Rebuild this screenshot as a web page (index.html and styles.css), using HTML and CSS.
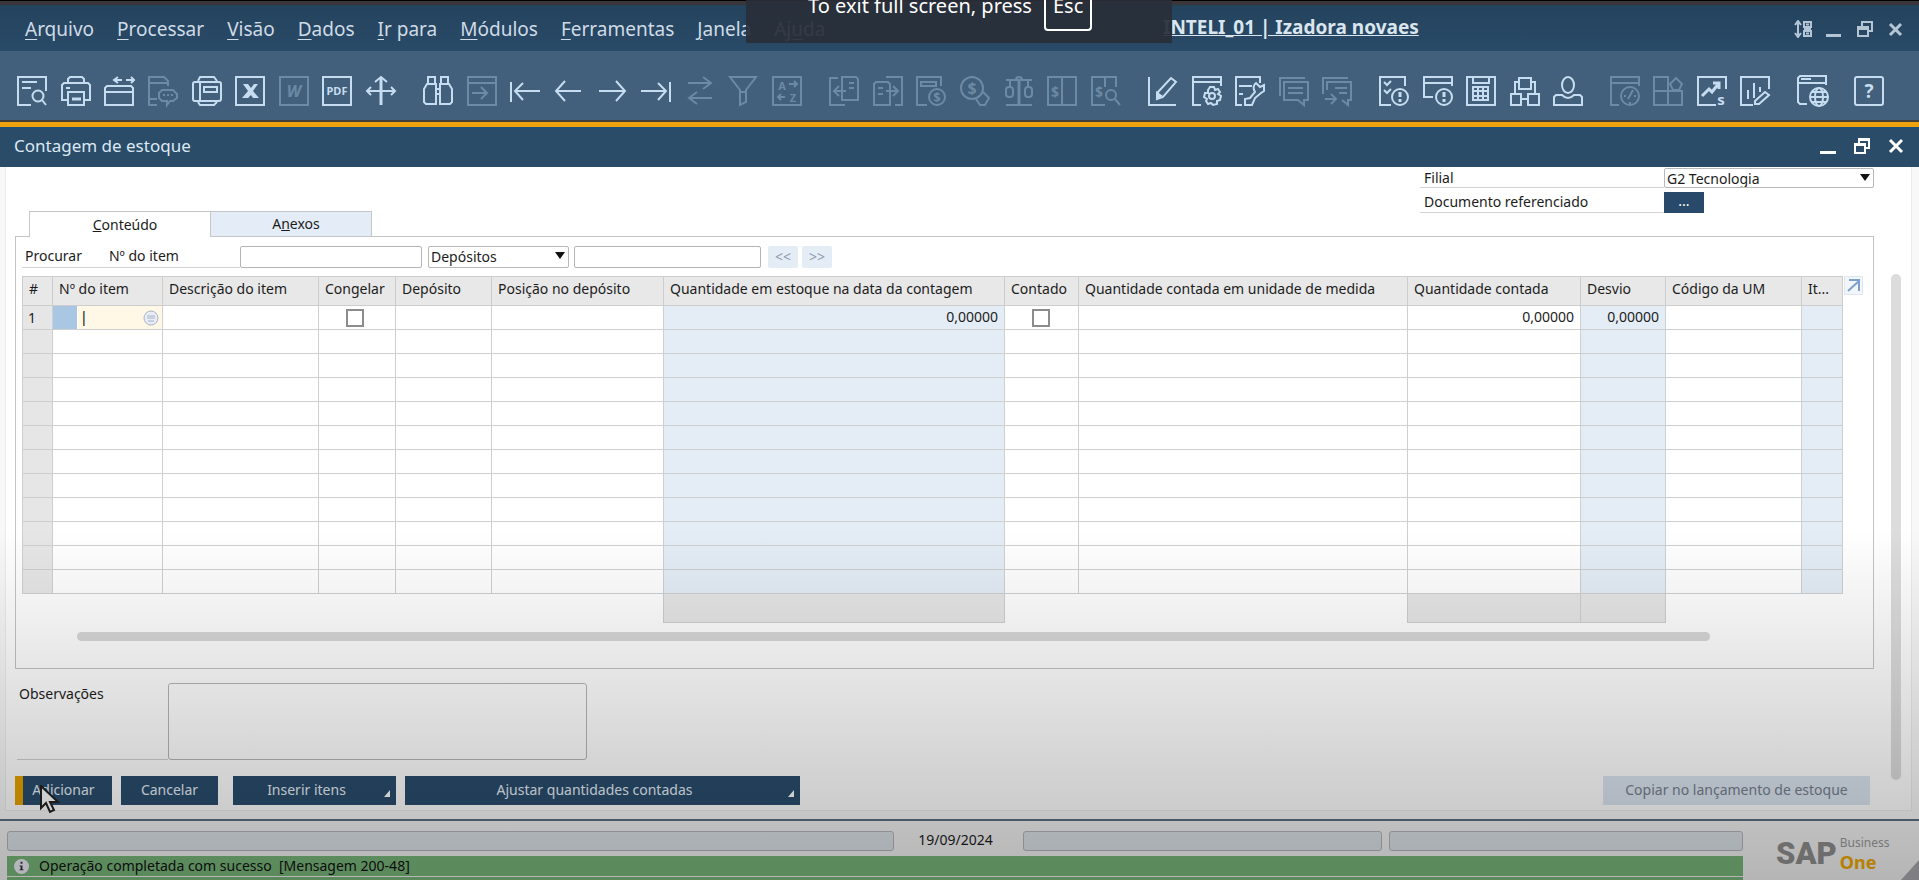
FILE: index.html
```html
<!DOCTYPE html>
<html lang="pt-BR">
<head>
<meta charset="utf-8">
<title>Contagem de estoque</title>
<link rel="stylesheet" href="styles.css">
</head>
<body>
<div class="edge"></div>
<header class="menubar">
  <nav class="menu">
    <a href="#"><u>A</u>rquivo</a><a href="#"><u>P</u>rocessar</a><a href="#"><u>V</u>isão</a><a href="#"><u>D</u>ados</a><a href="#"><u>I</u>r para</a><a href="#"><u>M</u>ódulos</a><a href="#"><u>F</u>erramentas</a><a href="#"><u>J</u>anela</a><a href="#">Aj<u>u</u>da</a>
  </nav>
  <a class="session" href="#">INTELI_01 | Izadora novaes</a>
  <div class="controls app-controls">
    <button aria-label="Alternar"><svg viewBox="0 0 18 18"><path d="M4 2v14M1 5l3-4 3 4M1 13l3 4 3-4"/><path d="M10 2h7v5h-7zM10 11h7v5h-7zM10 9h7M12 4.500h3M12 13.500h3"/></svg></button>
    <button aria-label="Minimizar"><svg viewBox="0 0 18 18"><path class="thick" d="M1 15.500h15"/></svg></button>
    <button aria-label="Restaurar"><svg viewBox="0 0 18 18"><path d="M2 7h10v9H2zM2 9h10M6 6V2h10v9h-3"/></svg></button>
    <button aria-label="Fechar"><svg viewBox="0 0 18 18"><path class="thick" d="M3 4l11 11M14 4L3 15"/></svg></button>
  </div>
</header>

<div class="toolbar">
  <div class="group g9">
    <button aria-label="Visualizar"><svg viewBox="0 0 30 30"><path d="M14 29H1V1h28v14M5 6h15M5 12h9"/><circle cx="21" cy="20" r="5.500"/><path d="M25 24l4 5"/></svg></button>
    <button aria-label="Imprimir"><svg viewBox="0 0 30 30"><path d="M7 7V3l2-2h12l2 2v4M7 24H1V9l2-2h24l2 2v15h-6M5 12h4M7 16h16v13H7z"/><path class="thick" d="M11 23h9"/></svg></button>
    <button aria-label="Exportar"><svg viewBox="0 0 30 30"><path d="M1 12l2-2h24l2 2v17H1zM1 16h28M11 4h7M22 4h8M14 1l-4 3 4 3M27 1l3 3-3 3"/></svg></button>
    <button aria-label="SMS" class="off" disabled><svg viewBox="0 0 30 30"><path d="M9 29H1V1h15l4 4v5M1 7h19M1 23h8M14 14h11l4 4v4l-4 3h-3l-3 4v-4h-5l-3-3v-5z"/><path d="M15 19h2M19 19h2M23 19h2"/></svg></button>
    <button aria-label="Fax"><svg viewBox="0 0 30 30"><path d="M6 5l2-4h14l3 4M6 26l2 3h14l3-3"/><rect x="1" y="6" width="28" height="19" rx="2"/><path d="M8 6v19M12 11h13v5H12z"/></svg></button>
    <button aria-label="Excel"><svg viewBox="0 0 30 30"><rect x="1" y="1" width="28" height="28"/><path class="fill" d="M8 8h5l3 4 3-4h4l-5 7 6 7h-6l-2-3-3 3H7l6-7z"/></svg></button>
    <button aria-label="Word" class="off" disabled><svg viewBox="0 0 30 30"><rect x="1" y="1" width="28" height="28"/><text x="15" y="21" font-size="16" font-style="italic">W</text></svg></button>
    <button aria-label="PDF"><svg viewBox="0 0 30 30"><rect x="1" y="1" width="28" height="28"/><text x="15" y="19" font-size="11">PDF</text></svg></button>
    <button aria-label="Mover"><svg viewBox="0 0 30 30"><path class="thick" d="M15 1v28"/><path d="M1 15h28M9 6l6-5 6 5M5 11l-4 4 4 4M25 11l4 4-4 4"/></svg></button>
  </div>
  <div class="group g9">
    <button aria-label="Localizar"><svg viewBox="0 0 30 30"><path d="M5 8V1h7v7M18 8V1h7v7M4 8h9v20H3l-2-2V13zM26 8h-9v20h10l2-2V13zM13 13h4M13 18h4"/></svg></button>
    <button aria-label="Adicionar registro" class="off" disabled><svg viewBox="0 0 30 30"><path d="M1 1h28v28H1zM1 7h28M5 17h14M14 11l6 6-6 6"/></svg></button>
    <button aria-label="Primeiro"><svg viewBox="0 0 30 30"><path d="M1 6v20M5 15h25M13 7l-8 8 8 9"/></svg></button>
    <button aria-label="Anterior"><svg viewBox="0 0 30 30"><path d="M2 15h25M11 5L2 15l9 10"/></svg></button>
    <button aria-label="Próximo"><svg viewBox="0 0 30 30"><path d="M1 15h26M18 5l9 10-9 10"/></svg></button>
    <button aria-label="Último"><svg viewBox="0 0 30 30"><path d="M29 6v20M0 15h25M17 7l8 8-8 9"/></svg></button>
    <button aria-label="Atualizar" class="off" disabled><svg viewBox="0 0 30 30"><path d="M3 7h22M18 1l8 6-8 6M27 22H5M12 16l-8 6 8 6"/></svg></button>
    <button aria-label="Filtrar" class="off" disabled><svg viewBox="0 0 30 30"><path d="M2 1h26L18 14v12l-6 3V14zM12 16h6"/></svg></button>
    <button aria-label="Classificar" class="off" disabled><svg viewBox="0 0 30 30"><rect x="1" y="1" width="28" height="28"/><text x="10" y="14" font-size="11">A</text><text x="21" y="26" font-size="11">Z</text><path d="M17 8h7M22 5l3 3-3 3M13 21H6M9 18l-3 3 3 3"/></svg></button>
  </div>
  <div class="group g7">
    <button aria-label="Documento base" class="off" disabled><svg viewBox="0 0 30 30"><path d="M9 2H1v27h15M13 1h14l2 2v21H13zM5 15h12M10 10l-5 5 5 5M20 7h5M20 12h5"/></svg></button>
    <button aria-label="Documento de destino" class="off" disabled><svg viewBox="0 0 30 30"><path d="M13 1h16v28h-7M3 6h12l2 2v21H1V8zM5 12h5M5 18h5M13 15h12M20 10l5 5-5 5"/></svg></button>
    <button aria-label="Lucro bruto" class="off" disabled><svg viewBox="0 0 30 30"><path d="M11 29H1V1h24v9M5 6h15v4H5z"/><circle cx="21" cy="21" r="8"/><text x="21" y="26" font-size="13">$</text></svg></button>
    <button aria-label="Meios de pagamento" class="off" disabled><svg viewBox="0 0 30 30"><circle cx="12" cy="12" r="11"/><text x="12" y="18" font-size="16">$</text><path d="M23 16l6 6-4 7h-5l-4-6"/></svg></button>
    <button aria-label="Balança" class="off" disabled><svg viewBox="0 0 30 30"><path class="thick" d="M15 3v26"/><path d="M2 29h26M2 4h26M12 4a3 3 0 0 1 6 0M6 4v7M24 4v7"/><rect x="2" y="11" width="7" height="10" rx="3"/><rect x="21" y="11" width="7" height="10" rx="3"/></svg></button>
    <button aria-label="Diário" class="off" disabled><svg viewBox="0 0 30 30"><path d="M1 1h28v28H1zM15 1v28"/><text x="8" y="21" font-size="14">$</text></svg></button>
    <button aria-label="Consultar diário" class="off" disabled><svg viewBox="0 0 30 30"><path d="M14 29H1V1h24v10M14 1v10"/><text x="8" y="21" font-size="14">$</text><circle cx="20" cy="19" r="5"/><path d="M24 23l5 6"/></svg></button>
  </div>
  <div class="group g5">
    <button aria-label="Editar"><svg viewBox="0 0 30 30"><path d="M1 1v28h27M10 16L23 2l5 4-13 15-6 2z"/><path class="fill" d="M8 15l7 5-5 3H8z"/></svg></button>
    <button aria-label="Configurações"><svg viewBox="0 0 30 30"><path d="M9 29H1V1h28v9M1 6h28"/><circle cx="20" cy="20" r="3"/><path d="M18 11h4l1 3 3-1 2 3-2 2 3 2-1 4-3 1v3l-4 1-2-2-3 1-2-3 1-2-3-2 1-4 3 0 0-3z"/></svg></button>
    <button aria-label="Ferramentas"><svg viewBox="0 0 30 30"><path d="M7 29H1V1h24v6M4 10h13M4 18h4M21 7c-3 2-3 6-1 9l-5 6-5 1v6h7l3-7 6-5 3-2V9l-4 2-2-2z"/></svg></button>
    <button aria-label="Mensagens" class="off" disabled><svg viewBox="0 0 30 30"><path d="M1 20V2h25M5 6h24v18h-4v5l-6-5H5zM9 12h15M9 17h15"/></svg></button>
    <button aria-label="Encaminhar" class="off" disabled><svg viewBox="0 0 30 30"><path d="M1 18V2h25M5 14V6h24v18h-3v5l-6-5M13 12h12M17 17h8M3 23h11M9 18l5 5-5 5"/></svg></button>
  </div>
  <div class="group g5">
    <button aria-label="Atividades"><svg viewBox="0 0 30 30"><path d="M12 29H1V1h25v9M5 6l3 3 4-4M5 14l3 3 4-4"/><circle cx="21" cy="21" r="8"/><path class="thick" d="M21 16v5M21 23v3"/></svg></button>
    <button aria-label="Alertas"><svg viewBox="0 0 30 30"><path d="M10 21H1V1h28v9M1 7h28"/><circle cx="21" cy="21" r="8"/><path class="thick" d="M21 16v5M21 23v3"/></svg></button>
    <button aria-label="Calendário"><svg viewBox="0 0 30 30"><path d="M1 1h28v28H1zM7 1v6h16V1M7 11h15v13H7zM7 15h15M7 20h15M12 11v13M17 11v13"/></svg></button>
    <button aria-label="Relações"><svg viewBox="0 0 30 30"><path d="M9 2h12v11H9zM1 18h10v11H1zM18 18h11v11H18zM9 6H5v12M21 6h4v12M11 23h7"/></svg></button>
    <button aria-label="Usuário"><svg viewBox="0 0 30 30"><ellipse cx="15" cy="9" rx="6" ry="8"/><path d="M9 19H3l-2 2v8h28v-8l-2-2h-6c-4 4-8 4-12 0z"/></svg></button>
  </div>
  <div class="group g4">
    <button aria-label="Histórico" class="off" disabled><svg viewBox="0 0 30 30"><path d="M9 29H1V1h28v9M1 7h28"/><circle cx="20" cy="20" r="9"/><path d="M23 14l-5 9M14 20h2M24 20h2M20 26v2"/></svg></button>
    <button aria-label="Painel" class="off" disabled><svg viewBox="0 0 30 30"><path d="M1 1h14v28H1zM1 15h28v14H15M23 2l6 6-3 6h-6l-3-6z"/></svg></button>
    <button aria-label="Indicadores"><svg viewBox="0 0 30 30"><path d="M19 29H1V1h28v12"/><path class="thick" d="M5 20l7-7 3 3 7-9M16 7h6v6"/><text x="24" y="29" font-size="15">s</text></svg></button>
    <button aria-label="Relatórios"><svg viewBox="0 0 30 30"><path d="M13 29H1V1h28v12M8 14v9M14 7v15M20 11v5M15 25l10-9 4 3-10 9h-4z"/></svg></button>
  </div>
  <button aria-label="Navegador"><svg viewBox="0 0 30 30"><path d="M10 28H3l-2-2V2l2-2h26v9M1 7h28M4 3h10"/><circle cx="22" cy="21" r="9"/><ellipse cx="22" cy="21" rx="4" ry="9"/><path d="M13 21h18M15 16h15M15 26h14"/></svg></button>
  <button aria-label="Ajuda"><svg viewBox="0 0 30 30"><rect x="1" y="1" width="28" height="28" rx="2"/><text x="15" y="22" font-size="19">?</text></svg></button>
</div>

<section class="window">
  <div class="titlebar">
    <h1>Contagem de estoque</h1>
    <div class="controls">
      <button aria-label="Minimizar janela"><svg viewBox="0 0 18 18"><path class="thick" d="M1 15.500h16"/></svg></button>
      <button aria-label="Restaurar janela"><svg viewBox="0 0 18 18"><path d="M2 7h10v9H2zM2 8h10M6 6V2h10v9h-3M6 3h10"/></svg></button>
      <button aria-label="Fechar janela"><svg viewBox="0 0 18 18"><path class="thick" d="M3 3l12 12M15 3L3 15"/></svg></button>
    </div>
  </div>
  <div class="content">
    <main class="form">
      <div class="top">
        <div class="tabs" role="tablist">
          <button role="tab" aria-selected="true" class="tab active"><u>C</u>onteúdo</button><button role="tab" aria-selected="false" class="tab">A<u>n</u>exos</button>
        </div>
        <div class="fields">
          <label for="filial">Filial</label>
          <span class="pick"><select id="filial"><option>G2 Tecnologia</option></select></span>
          <label for="docref">Documento referenciado</label>
          <button id="docref" class="more">...</button>
        </div>
      </div>
      <div class="panel">
        <div class="search">
          <label class="line" for="procurar"><span>Procurar</span><span>Nº do item</span></label>
          <input id="procurar" class="box first" type="text">
          <span class="pick dep"><select aria-label="Campo"><option>Depósitos</option></select></span>
          <input class="box second" type="text" aria-label="Depósito">
          <button class="step" disabled>&lt;&lt;</button>
          <button class="step" disabled>&gt;&gt;</button>
        </div>
        <div class="gridwrap">
          <table class="grid">
            <colgroup><col class="c30"><col class="c110"><col class="c156"><col class="c77"><col class="c96"><col class="c172"><col class="c341"><col class="c74"><col class="c329"><col class="c173"><col class="c85"><col class="c136"><col class="c41"></colgroup>
            <thead><tr><th class="num">#</th><th>Nº do item</th><th>Descrição do item</th><th>Congelar</th><th>Depósito</th><th>Posição no depósito</th><th>Quantidade em estoque na data da contagem</th><th>Contado</th><th>Quantidade contada em unidade de medida</th><th>Quantidade contada</th><th>Desvio</th><th>Código da UM</th><th>It...</th></tr></thead>
            <tbody>
              <tr><td class="no">1</td><td class="edit"><div class="editor"><span class="mark"></span><input type="text" value="|" aria-label="Nº do item"><svg class="pickicon" viewBox="0 0 16 16"><circle cx="8" cy="8" r="7"/><path d="M4 6h8M4 8h8M5 11h6"/></svg></div></td><td></td><td class="mid"><input type="checkbox" aria-label="Congelar"></td><td></td><td></td><td class="ro val">0,00000</td><td class="mid"><input type="checkbox" aria-label="Contado"></td><td></td><td class="val">0,00000</td><td class="ro val">0,00000</td><td></td><td class="ro"></td></tr>
              <tr><td class="no"></td><td></td><td></td><td></td><td></td><td></td><td class="ro"></td><td></td><td></td><td></td><td class="ro"></td><td></td><td class="ro"></td></tr>
              <tr><td class="no"></td><td></td><td></td><td></td><td></td><td></td><td class="ro"></td><td></td><td></td><td></td><td class="ro"></td><td></td><td class="ro"></td></tr>
              <tr><td class="no"></td><td></td><td></td><td></td><td></td><td></td><td class="ro"></td><td></td><td></td><td></td><td class="ro"></td><td></td><td class="ro"></td></tr>
              <tr><td class="no"></td><td></td><td></td><td></td><td></td><td></td><td class="ro"></td><td></td><td></td><td></td><td class="ro"></td><td></td><td class="ro"></td></tr>
              <tr><td class="no"></td><td></td><td></td><td></td><td></td><td></td><td class="ro"></td><td></td><td></td><td></td><td class="ro"></td><td></td><td class="ro"></td></tr>
              <tr><td class="no"></td><td></td><td></td><td></td><td></td><td></td><td class="ro"></td><td></td><td></td><td></td><td class="ro"></td><td></td><td class="ro"></td></tr>
              <tr><td class="no"></td><td></td><td></td><td></td><td></td><td></td><td class="ro"></td><td></td><td></td><td></td><td class="ro"></td><td></td><td class="ro"></td></tr>
              <tr><td class="no"></td><td></td><td></td><td></td><td></td><td></td><td class="ro"></td><td></td><td></td><td></td><td class="ro"></td><td></td><td class="ro"></td></tr>
              <tr><td class="no"></td><td></td><td></td><td></td><td></td><td></td><td class="ro"></td><td></td><td></td><td></td><td class="ro"></td><td></td><td class="ro"></td></tr>
              <tr><td class="no"></td><td></td><td></td><td></td><td></td><td></td><td class="ro"></td><td></td><td></td><td></td><td class="ro"></td><td></td><td class="ro"></td></tr>
              <tr><td class="no"></td><td></td><td></td><td></td><td></td><td></td><td class="ro"></td><td></td><td></td><td></td><td class="ro"></td><td></td><td class="ro"></td></tr>
            </tbody>
            <tfoot><tr><td colspan="6" class="none"></td><td class="sum"></td><td colspan="2" class="none"></td><td class="sum"></td><td class="sum"></td><td colspan="2" class="none"></td></tr></tfoot>
          </table>
          <button class="expand" aria-label="Expandir"><svg viewBox="0 0 17 17"><path d="M3 14L14 4M4 3h10v11"/></svg></button>
        </div>
        <div class="hscroll"></div>
      </div>
      <div class="notes">
        <label for="obs">Observações</label>
        <textarea id="obs"></textarea>
      </div>
      <div class="actions">
        <button class="act primary">Adicionar</button>
        <button class="act cancel">Cancelar</button>
        <button class="act insert drop">Inserir itens</button>
        <button class="act adjust drop">Ajustar quantidades contadas</button>
        <button class="act copy" disabled>Copiar no lançamento de estoque</button>
        <svg class="cursor" viewBox="0 0 20 30"><path d="M1 1v22l5-5 4 9 4-2-4-8h8z"/></svg>
      </div>
    </main>
    <div class="vscroll"></div>
  </div>
</section>

<footer class="status">
  <div class="lines">
    <div class="slots"><span class="slot s1"></span><time datetime="2024-09-19">19/09/2024</time><span class="slot s2"></span><span class="slot s3"></span></div>
    <div class="message"><svg viewBox="0 0 16 16"><circle cx="8" cy="8" r="8"/><path d="M7 3h2v2H7zM6 7h3v4h1v1H6v-1h1V8H6z"/></svg><span>Operação completada com sucesso&nbsp; [Mensagem 200-48]</span></div>
    <div class="next"></div>
  </div>
  <div class="brand"><b>SAP</b><div class="product"><span>Business</span><strong>One</strong></div></div>
  <svg class="grip" viewBox="0 0 18 20"><path d="M18 0v20H0z"/></svg>
</footer>
<div class="shade"></div>
<div class="toast"><svg class="nub" viewBox="0 0 60 26"><path class="tab-shape" d="M0 0h60l-3 22-5 4H8l-5-4z"/><path d="M22 12l8 7 8-7"/></svg><span>To exit full screen, press</span><kbd>Esc</kbd></div>
</body>
</html>
```
FILE: styles.css
```css
* { box-sizing: border-box; }
body {
  margin: 0;
  height: 100vh;
  display: flex;
  flex-direction: column;
  position: relative;
  overflow: hidden;
  background: #fff;
  color: #1c1c1c;
  font: 14px/20px "Noto Sans", "Open Sans", sans-serif;
}
button, input, select, textarea { font: inherit; color: inherit; margin: 0; }
button { padding: 0; border: 0; background: none; }
svg { display: block; fill: none; stroke: currentColor; stroke-width: 2; }
.thick { stroke-width: 3; }
.edge { height: 5px; background: #3a3639; border-top: 1px solid #000; flex: none; }

.menubar {
  display: flex;
  align-items: center;
  position: relative;
  height: 46px;
  flex: none;
  padding: 2px 14px 0 25px;
  background: linear-gradient(#24435d, #294a68);
}
.menu { display: flex; gap: 23px; font-size: 19px; line-height: 26px; }
.menu a { color: #cfdbe6; text-decoration: none; }
.menu u { text-underline-offset: 3px; }
.session {
  position: absolute;
  left: 1163px;
  top: 9px;
  color: #dbe5ee;
  font: bold 19px/26px "Noto Sans", sans-serif;
}
.controls { display: flex; gap: 16px; margin-left: auto; color: #fff; }
.controls svg { width: 18px; height: 18px; }
.app-controls { color: #b4c6d6; gap: 13px; }

.toolbar {
  display: flex;
  align-items: center;
  gap: 27px;
  height: 71px;
  flex: none;
  padding: 10px 17px 0;
  border-bottom: 2px solid #42403c;
  background: #425f7b;
  color: #c6dcf0;
}
.group { display: flex; justify-content: space-between; flex: none; }
.g9 { width: 379px; }
.g7 { width: 292px; }
.g5 { width: 204px; }
.g4 { width: 160px; }
.toolbar svg { width: 30px; height: 30px; overflow: visible; }
.toolbar .off { color: #6b8aa4; }
.toolbar text { fill: currentColor; stroke: none; text-anchor: middle; font-family: "Noto Sans", sans-serif; font-weight: bold; }
.toolbar .fill { fill: currentColor; stroke: none; }

.window { flex: 1; display: flex; flex-direction: column; border-bottom: 2px solid #5a6f84; }
.titlebar {
  display: flex;
  align-items: center;
  height: 45px;
  padding: 0 14px 2px;
  border-top: 5px solid #eda20e;
  box-shadow: inset 0 2px #1e5079;
  background: #2a4c69;
}
.titlebar h1 { margin: 0; color: #dce8f3; font-size: 17px; line-height: 22px; font-weight: 400; }

.content {
  flex: 1;
  display: flex;
  margin: 0 7px 8px 5px;
  border: 1px solid #ececec;
  border-top: 0;
  box-shadow: 0 0 0 8px #f8f8f8;
  clip-path: inset(0 -8px -8px -8px);
}
.form { flex: 1; display: flex; flex-direction: column; padding: 1px 0 0 9px; }
.top { display: flex; justify-content: space-between; height: 68px; }
.tabs { display: flex; align-self: flex-end; padding-left: 14px; position: relative; }
.tab { width: 162px; height: 26px; border: 1px solid #c4c6c8; background: #e4edf7; padding-left: 10px; margin-bottom: -1px; }
.tab.active { width: 181px; border-right: 0; border-bottom: 0; background: #fff; z-index: 1; }
.fields {
  display: grid;
  grid-template-columns: 244px 210px;
  grid-template-rows: 20px 21px;
  row-gap: 4px;
  align-content: start;
}
.fields label { border-bottom: 1px solid #d4d4d4; padding-left: 4px; }
.more { width: 40px; height: 21px; background: #29496a; color: #fff; line-height: 16px; padding-bottom: 4px; }
.pick { position: relative; display: block; }
.pick::after {
  content: "";
  position: absolute;
  right: 4px;
  top: 6px;
  border: 5px solid transparent;
  border-top: 7px solid #111;
  border-bottom: 0;
}
select {
  appearance: none;
  display: block;
  width: 100%;
  height: 100%;
  padding: 0 2px;
  border: 1px solid #b8b8b8;
  border-radius: 2px;
  background: transparent;
}

.panel { border: 1px solid #c2c4c6; padding: 9px 10px 27px 6px; }
.search { display: flex; height: 22px; }
.line { display: flex; width: 218px; padding-left: 3px; border-bottom: 1px solid #d4d4d4; gap: 27px; }
.box { height: 22px; border: 1px solid #b4b4b4; border-radius: 2px; background: transparent; }
.first { width: 182px; }
.dep { width: 141px; margin: 0 5px 0 6px; }
.second { width: 187px; margin-right: 7px; }
.step { width: 30px; margin-right: 4px; border-radius: 2px; background: #e4ecf6; color: #8c9cb0; }
.gridwrap { display: flex; align-items: flex-start; gap: 1px; margin-top: 8px; }
.grid { flex: 1; width: 100%; table-layout: fixed; border-collapse: collapse; }
.c30 { width: 30px; } .c110 { width: 110px; } .c156 { width: 156px; } .c77 { width: 77px; }
.c96 { width: 96px; } .c172 { width: 172px; } .c341 { width: 341px; } .c74 { width: 74px; }
.c329 { width: 329px; } .c173 { width: 173px; } .c85 { width: 85px; } .c136 { width: 136px; }
.c41 { width: 41px; }
.grid th { height: 29px; padding: 0 0 4px 6px; background: #e8e8e8; border: 1px solid #cdcdcd; text-align: left; font-weight: 400; white-space: nowrap; }
.grid td { height: 24px; padding: 0; border: 1px solid #cdcfd1; line-height: 22px; }
.grid .no { background: #e6e6e6; padding-left: 5px; }
.grid .ro { background: #e4edf6; }
.grid .val { text-align: right; padding-right: 6px; padding-bottom: 1px; }
.grid .mid { padding-left: 27px; }
.grid .none { border: 0; }
.grid .sum { height: 29px; background: #e6e6e6; }
.mid input {
  appearance: none;
  display: block;
  width: 18px;
  height: 18px;
  border: 2px solid #8a8c8e;
  background: #fff;
}
.editor { display: flex; height: 23px; align-items: center; background: #fff8e6; }
.mark { align-self: stretch; width: 25px; background: #a9c6e2; border-right: 1px solid #fff; flex: none; }
.editor input { flex: 1; min-width: 0; width: 10px; height: 23px; padding: 0 0 3px 2px; border: 0; background: transparent; color: #000; }
.pickicon { width: 16px; height: 16px; margin-right: 3px; color: #a8b4c8; stroke-width: 1; fill: #e8ecf4; }
.expand { border: 1px solid #dde6f2; background: #f2f6fb; color: #7fa0cb; }
.expand svg { width: 17px; height: 17px; }
.hscroll { height: 9px; margin: 9px 153px 0 55px; border-radius: 5px; background: #d8d8d8; }
.vscroll { flex: none; width: 10px; margin: 107px 10px 30px 17px; border-radius: 5px; background: #dcdcdc; }

.notes { display: flex; margin: 14px 0 0 2px; }
.notes label { width: 151px; padding: 1px 0 0 2px; border-bottom: 1px solid #d0d0d0; }
.notes textarea { width: 419px; height: 77px; border: 1px solid #b6b6b6; border-radius: 3px; background: transparent; resize: none; }
.actions { display: flex; position: relative; margin-top: 16px; }
.act { height: 29px; padding-bottom: 2px; background: #294c6c; color: #e6eef6; position: relative; }
.primary { width: 97px; border-left: 8px solid #e8a200; margin-right: 9px; padding-right: 8px; }
.cancel { width: 97px; margin-right: 15px; }
.insert { width: 163px; margin-right: 9px; padding-right: 16px; }
.adjust { width: 395px; padding-right: 16px; }
.drop::after {
  content: "";
  position: absolute;
  right: 6px;
  bottom: 8px;
  border-left: 6px solid transparent;
  border-bottom: 7px solid #fff;
}
.copy { width: 267px; margin: 0 4px 0 auto; background: #dbe5f1; color: #76808e; }
.cursor { position: absolute; left: 25px; top: 9px; width: 20px; height: 30px; fill: #fff; stroke: #222; }

.status { flex: none; display: flex; position: relative; height: 59px; background: #f2f2f2; }
.lines { flex: 1; padding: 10px 0 0 7px; }
.slots { display: flex; height: 20px; }
.slot { border: 1px solid #b4b6be; border-radius: 3px; background: #dce3e8; }
.s1 { width: 887px; }
.slots time { width: 123px; margin-right: 6px; text-align: center; line-height: 18px; }
.s2 { width: 359px; margin-right: 7px; }
.s3 { flex: 1; }
.message { display: flex; align-items: center; gap: 10px; height: 20px; margin-top: 5px; padding-left: 7px; background: #78b77a; color: #111; }
.message svg { width: 15px; height: 15px; fill: #eef0f6; stroke: none; }
.message path { fill: #334; }
.next { height: 3px; margin-top: 1px; background: #78b77a; }
.brand { display: flex; width: 176px; padding: 14px 0 0 33px; gap: 3px; color: #9a9a9a; }
.brand b { font: 900 31px/38px Roboto, sans-serif; color: #8e8e8e; }
.product { display: flex; flex-direction: column; font-size: 12px; line-height: 16px; }
.product strong { font-size: 18px; line-height: 22px; color: #f0a800; }
.grip { position: absolute; right: 0; bottom: 0; width: 18px; height: 20px; fill: #a8a8ae; stroke: none; }

.shade {
  position: absolute;
  inset: 60% 0 0 0;
  pointer-events: none;
  background: linear-gradient(rgba(0,0,0,0), rgba(0,0,0,.05) 21%, rgba(0,0,0,.12) 49%, rgba(0,0,0,.18) 72%, rgba(0,0,0,.25));
}
.toast {
  position: absolute;
  left: 746px;
  top: 0;
  width: 426px;
  height: 43px;
  padding-left: 62px;
  display: flex;
  gap: 12px;
  overflow: hidden;
  background: rgba(41,46,57,.93);
  color: #fff;
  font-size: 20px;
  line-height: 12px;
}
.toast kbd { height: 31px; padding: 0 7px; border: 2px solid #fff; border-top: 0; border-radius: 0 0 4px 4px; font: inherit; }
.nub { position: absolute; left: 180px; top: 0; width: 60px; height: 26px; color: #454850; z-index: -1; }
.tab-shape { fill: #31343d; stroke: none; }
```
